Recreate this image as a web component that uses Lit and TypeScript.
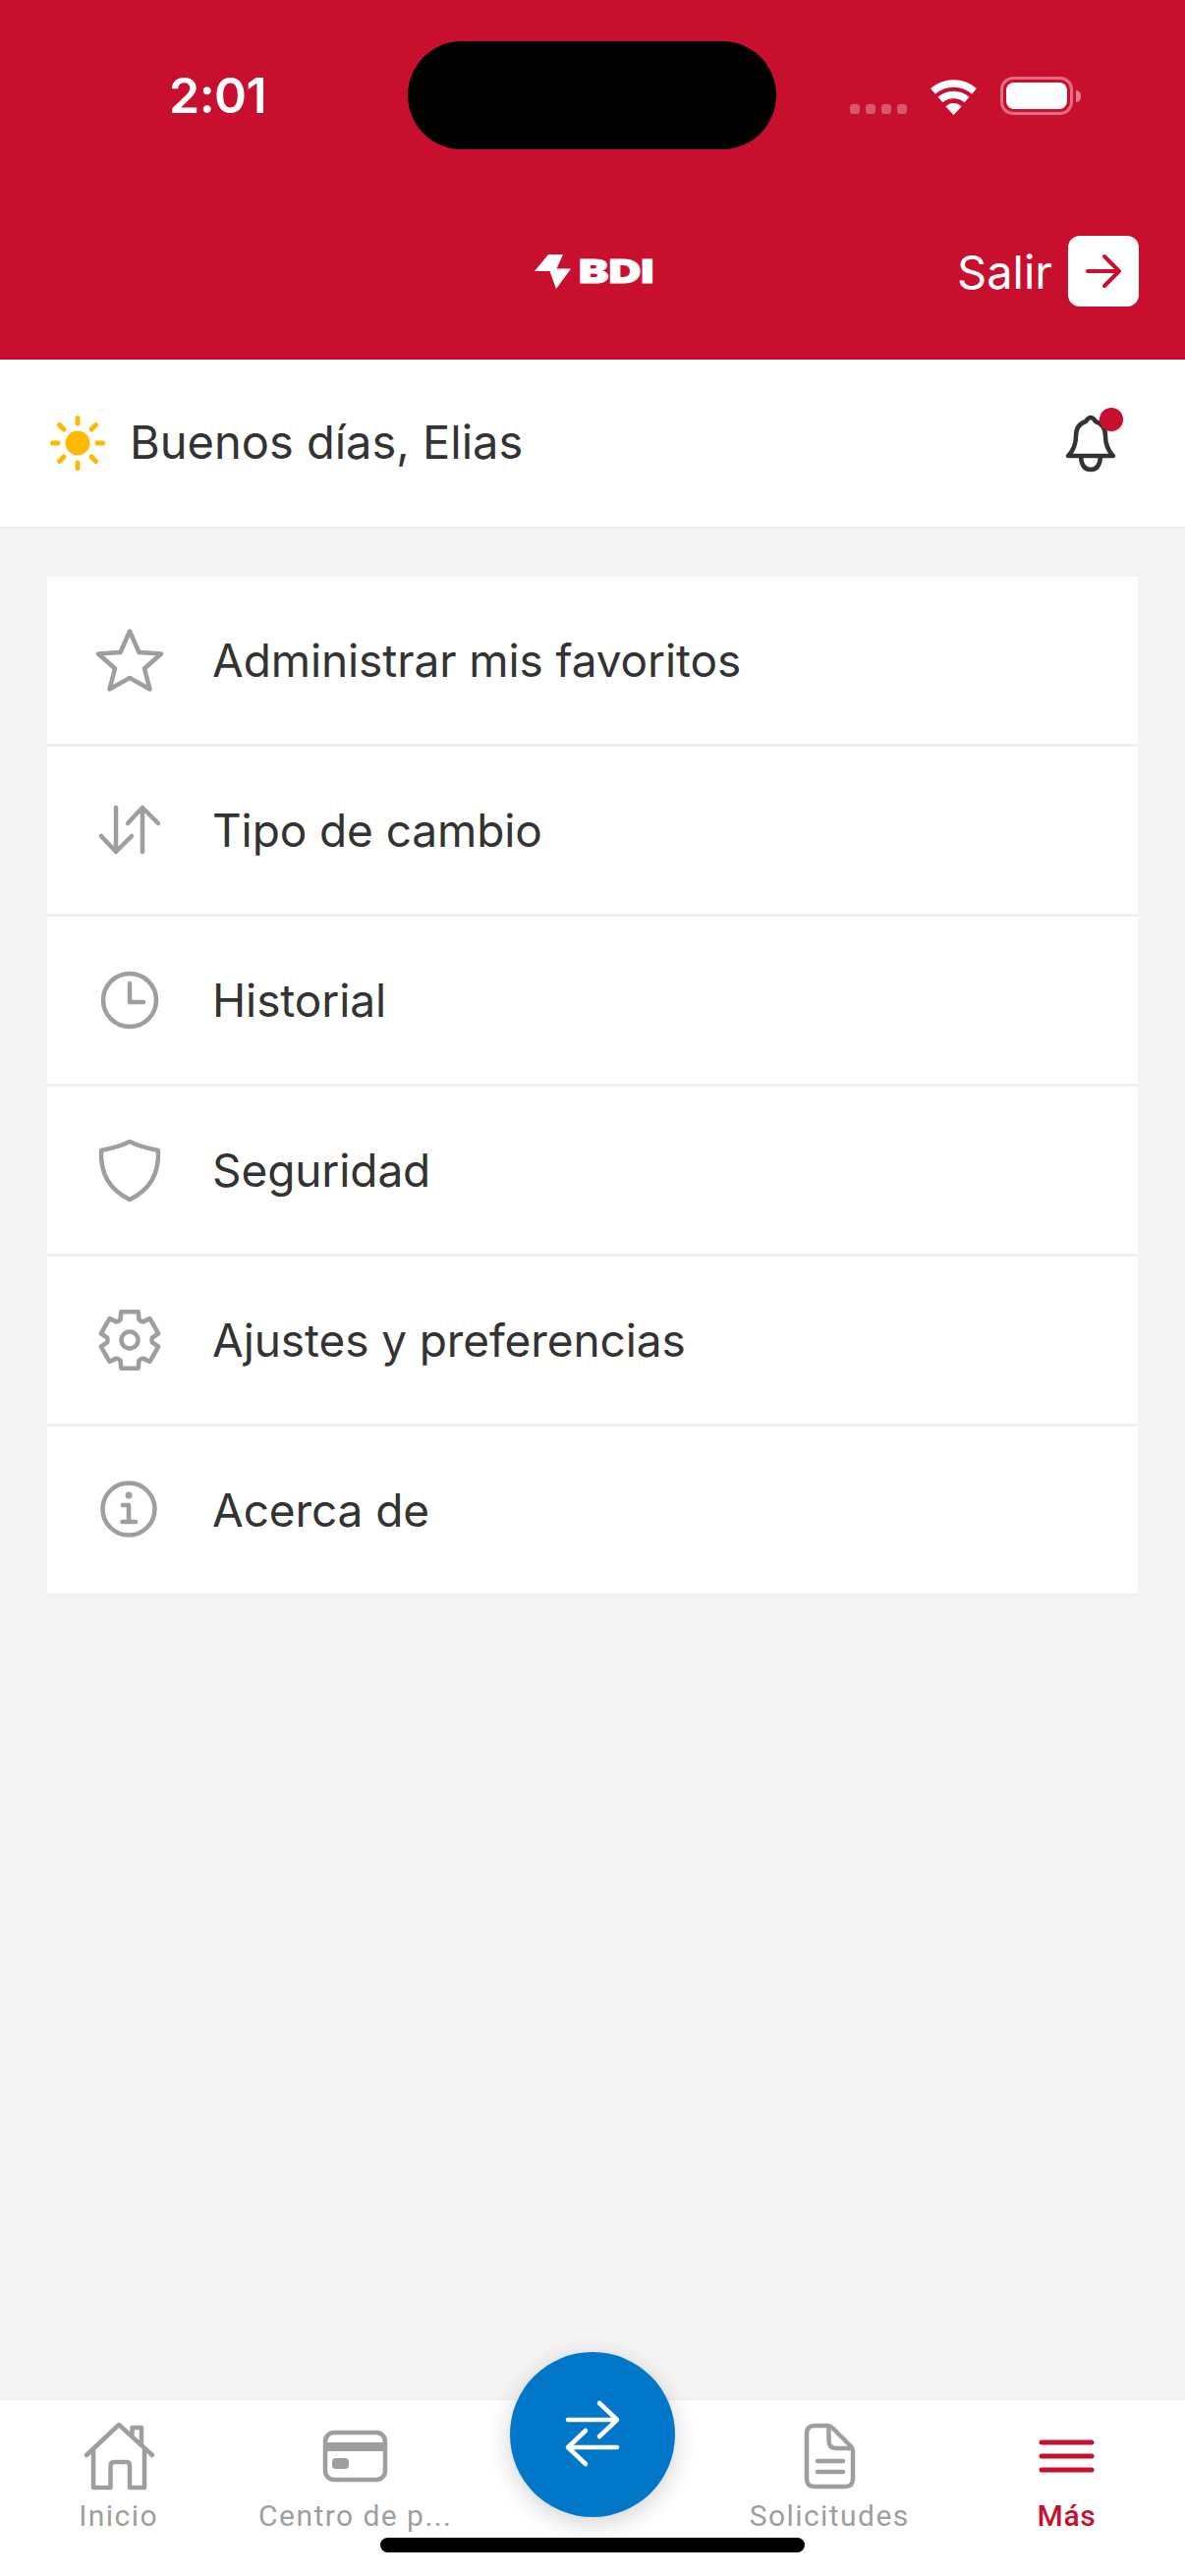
import { LitElement, html, css, svg } from "lit";
import { customElement } from "lit/decorators.js";

function gearPath(cx: number, cy: number): string {
  const pts: string[] = [];
  const Ro = 30, Ri = 23;
  for (let i = 0; i < 6; i++) {
    const a = (i * 60 - 90) * Math.PI / 180;
    const p = (r: number, d: number) => {
      const t = a + d * Math.PI / 180;
      return `${(cx + r * Math.cos(t)).toFixed(1)} ${(cy + r * Math.sin(t)).toFixed(1)}`;
    };
    pts.push(`${i === 0 ? "M" : "Q " + p(Ri - 1, -30) + " "}${p(Ri, -24)}`);
    pts.push(`L ${p(Ro, -17)} L ${p(Ro, 17)} L ${p(Ri, 24)}`);
  }
  const a0 = -120 * Math.PI / 180;
  const c = `${(cx + (Ri - 1) * Math.cos(a0)).toFixed(1)} ${(cy + (Ri - 1) * Math.sin(a0)).toFixed(1)}`;
  const s0 = `${(cx + Ri * Math.cos(-114 * Math.PI / 180)).toFixed(1)} ${(cy + Ri * Math.sin(-114 * Math.PI / 180)).toFixed(1)}`;
  return pts.join(" ") + ` Q ${c} ${s0} Z`;
}

const rows = [
  {
    label: "Administrar mis favoritos",
    box: "96 636 72 72",
    icon: svg`<path d="M132 642.500 L141.500 664 L164 665.500 L147 680.500 L152.500 701.500 L132 690 L111.500 701.500 L117 680.500 L100 665.500 L122.500 664 Z"/>`,
  },
  {
    label: "Tipo de cambio",
    box: "96 809 72 72",
    icon: svg`<path d="M118 822V867M103 851L118 867L134 851M145 822V867M130 838L145 822L161 838"/>`,
  },
  {
    label: "Historial",
    box: "96 982 72 72",
    icon: svg`<circle cx="132" cy="1018" r="27"/><path d="M132 1001V1020H146"/>`,
  },
  {
    label: "Seguridad",
    box: "96 1155 72 72",
    icon: svg`<path d="M132 1162 C122 1167 113 1169 103 1171 C102 1196 112 1211 132 1221 C152 1211 162 1196 161 1171 C151 1169 142 1167 132 1162 Z"/>`,
  },
  {
    label: "Ajustes y preferencias",
    box: "96 1328 72 72",
    icon: svg`<path d="${gearPath(132, 1364)}"/><circle cx="132" cy="1364" r="8.500"/>`,
  },
  {
    label: "Acerca de",
    box: "96 1501 72 72",
    icon: svg`<circle cx="131" cy="1536" r="26.500"/><path d="M125 1532H131V1549M124.500 1549H138"/><circle cx="131" cy="1522" r="3.500" fill="#9e9e9e" stroke="none"/>`,
  },
];

const tabs = [
  {
    label: "Inicio",
    box: "80 2464 80 72",
    icon: svg`<path d="M87 2499 L120 2468 L154 2499 M94 2492 V2532 H111.500 V2510 Q111.500 2506 115 2506 H128 Q131 2506 131 2510 V2532 H146 V2492 M133.500 2478 V2471 H143 V2489"/>`,
  },
  {
    label: "Centro de p...",
    box: "322 2464 80 72",
    icon: svg`<rect x="331" y="2476" width="61" height="48" rx="9"/><rect x="331" y="2486" width="61" height="9" fill="#9e9e9e" stroke="none"/><rect x="338" y="2502" width="17" height="11" rx="4" fill="#9e9e9e" stroke="none"/>`,
  },
  null,
  {
    label: "Solicitudes",
    box: "804 2464 80 72",
    icon: svg`<path d="M829 2469 H842 Q845 2469 847 2471 L866 2490 Q868 2492 868 2495 V2523 Q868 2531 860 2531 H829 Q821 2531 821 2523 V2477 Q821 2469 829 2469 Z M843.500 2470 V2484 Q843.500 2492 851 2492 H867 M832 2505 H858 M832 2516 H858"/>`,
  },
  {
    label: "Más",
    box: "1045 2464 80 72",
    active: true,
    icon: svg`<path d="M1060 2486 H1111 M1060 2500 H1111 M1060 2514 H1111"/>`,
  },
];

@customElement("app-root")
export class AppRoot extends LitElement {
  static styles = css`
    :host { display: block; }
    * { box-sizing: border-box; }
    .page {
      position: relative;
      width: 1206px;
      height: 2622px;
      display: flex;
      flex-direction: column;
      background: #f4f4f4;
      font-family: Inter, "Liberation Sans", sans-serif;
      color: #333;
      overflow: hidden;
    }
    .header { background: #c8102e; color: #fff; height: 366px; flex: none; }
    .status {
      height: 240px;
      padding: 78px 106px 0 172px;
      display: flex;
      justify-content: space-between;
      align-items: flex-start;
    }
    .time { font-size: 50px; font-weight: 600; line-height: 39px; letter-spacing: -0.5px; }
    .sys { display: flex; align-items: flex-end; height: 39px; }
    .dots { display: flex; gap: 6px; margin-right: 23px; margin-bottom: 1px; }
    .dots i { width: 10px; height: 10px; border-radius: 3px; background: rgba(255,255,255,.3); display: block; }
    .wifi { width: 52px; height: 38px; display: block; margin-right: 21px; margin-left: -1px; }
    .batt {
      width: 74px; height: 39px; border: 3px solid rgba(255,255,255,.4);
      border-radius: 13px; padding: 3px; position: relative;
    }
    .batt b { display: block; height: 100%; background: #fff; border-radius: 8px; }
    .nub {
      width: 5px; height: 12px; margin: 0 0 13px 3px;
      background: rgba(255,255,255,.45); border-radius: 0 6px 6px 0;
    }
    .nav {
      height: 72px;
      padding: 0 47px;
      display: grid;
      grid-template-columns: 1fr auto 1fr;
      align-items: center;
    }
    .logo {
      grid-column: 2;
      display: flex;
      align-items: center;
      width: 120px;
      margin-left: 1px;
      gap: 8px;
    }
    .logo svg { width: 37px; height: 35px; display: block; flex: none; }
    .bdi {
      font-family: Inter, sans-serif;
      font-weight: 900;
      font-size: 33px;
      line-height: 24px;
      letter-spacing: 0;
      transform: scaleX(1.38);
      transform-origin: left center;
      -webkit-text-stroke: 1px #fff;
    }
    .exit {
      grid-column: 3;
      justify-self: end;
      display: flex;
      align-items: center;
      gap: 16px;
      font-size: 47px;
      line-height: 72px;
    }
    .exit span { position: relative; top: 1px; }
    .exitbtn {
      width: 72px; height: 72px; border-radius: 12px; background: #fff;
      display: flex; align-items: center; justify-content: center;
    }
    .exitbtn svg { width: 40px; height: 40px; display: block; }
    .greet {
      height: 173px;
      flex: none;
      background: #fff;
      border-bottom: 3px solid #eeeeee;
      padding: 0 62px 0 51px;
      display: flex;
      align-items: center;
    }
    .sun { width: 56px; height: 56px; display: block; flex: none; margin-right: 25px; }
    .greet .txt { flex: 1; font-size: 47px; line-height: 60px; position: relative; top: -1px; }
    .bell { position: relative; width: 66px; height: 66px; flex: none; }
    .bell svg { width: 66px; height: 66px; display: block; }
    .bell i {
      position: absolute; right: 1px; top: -3px; width: 24px; height: 24px;
      border-radius: 50%; background: #c8102e;
    }
    .main { flex: 1; padding: 48px 48px 0; }
    .list { display: flex; flex-direction: column; }
    .row {
      height: 173px;
      background: #fff;
      border-bottom: 3px solid #f0f0f0;
      display: flex;
      align-items: center;
      padding-left: 48px;
      gap: 48px;
      font-size: 46px;
      letter-spacing: -0.1px;
    }
    .row svg {
      width: 72px; height: 72px; display: block; flex: none;
      fill: none; stroke: #9e9e9e; stroke-width: 4.500; stroke-linecap: round; stroke-linejoin: round;
    }
    .tabbar {
      height: 180px;
      flex: none;
      background: #fff;
      border-top: 1px solid #ececec;
      display: grid;
      grid-template-columns: repeat(5, 1fr);
      padding-top: 21px;
    }
    .tab {
      display: flex;
      flex-direction: column;
      align-items: center;
      color: #9e9e9e;
      font-family: Roboto, sans-serif;
      font-size: 30px;
      line-height: 34px;
      letter-spacing: 1.45px;
      gap: 8px;
      white-space: nowrap;
    }
    .tab svg {
      width: 80px; height: 72px; display: block;
      fill: none; stroke: #9e9e9e; stroke-width: 4.500; stroke-linecap: round; stroke-linejoin: round;
    }
    .tab.on { color: #c8102e; font-weight: 500; letter-spacing: .6px; }
    .tab.on svg { stroke: #c8102e; stroke-width: 5; }
    .fab {
      position: absolute; left: 519px; top: 2394px; width: 168px; height: 168px;
      border-radius: 50%; background: #0277c9;
      box-shadow: 0 6px 24px rgba(0,0,0,.18);
      display: flex; align-items: center; justify-content: center;
    }
    .fab svg {
      width: 72px; height: 72px; display: block;
      fill: none; stroke: #fff; stroke-width: 4.500; stroke-linecap: round; stroke-linejoin: round;
    }
    .island {
      position: absolute; left: 415px; top: 42px; width: 375px; height: 110px;
      border-radius: 55px; background: #000;
    }
    .home {
      position: absolute; left: 387px; top: 2583px; width: 432px; height: 15px;
      border-radius: 8px; background: #000;
    }
  `;

  render() {
    return html`
      <div class="page">
        <div class="header">
          <div class="status">
            <div class="time">2:01</div>
            <div class="sys">
              <div class="dots"><i></i><i></i><i></i><i></i></div>
              <svg class="wifi" viewBox="0 0 52 38">
                <path d="M4.500 13.800 A32 32 0 0 1 46.500 13.800 M12 22.500 A20.500 20.500 0 0 1 39 22.500" fill="none" stroke="#fff" stroke-width="7.500"/>
                <path d="M25.500 38 L17.500 29.500 A11 11 0 0 1 33.500 29.500 Z" fill="#fff"/>
              </svg>
              <div class="batt"><b></b></div>
              <div class="nub"></div>
            </div>
          </div>
          <div class="nav">
            <div class="logo">
              <svg viewBox="0 0 37 35"><path d="M14 0 H29 L22.500 14.500 H37 L22 35 L15.500 17 H0 Z" fill="#fff"/></svg>
              <span class="bdi">BDI</span>
            </div>
            <div class="exit">
              <span>Salir</span>
              <div class="exitbtn">
                <svg viewBox="0 0 40 40"><path d="M4 20 H36 M21 5 L36 20 L21 35" fill="none" stroke="#c8102e" stroke-width="4" stroke-linecap="round" stroke-linejoin="round"/></svg>
              </div>
            </div>
          </div>
        </div>
        <div class="greet">
          <svg class="sun" viewBox="0 0 56 56">
            <circle cx="28" cy="28" r="12.500" fill="#ffb900"/>
            <path d="M28 2.500V8M28 48V53.500M2.500 28H8M48 28H53.500M9.500 9.500L14 14M42 42L46.500 46.500M9.500 46.500L14 42M42 14L46.500 9.500" stroke="#ffb900" stroke-width="5" stroke-linecap="round"/>
          </svg>
          <div class="txt">Buenos días, Elias</div>
          <div class="bell">
            <svg viewBox="1078 418 66 66">
              <path d="M1087 464 Q1095 456 1095 444 Q1095 432 1105 429 Q1110 421 1115 429 Q1125 432 1125 444 Q1125 456 1133 464 Z M1100 465 Q1101 478 1110 478 Q1119 478 1120 465" fill="none" stroke="#333" stroke-width="4.500" stroke-linejoin="round" stroke-linecap="round"/>
            </svg>
            <i></i>
          </div>
        </div>
        <div class="main">
          <div class="list">
            ${rows.map(
              (r) => html`<div class="row">
                <svg viewBox="${r.box}">${r.icon}</svg>
                <span>${r.label}</span>
              </div>`
            )}
          </div>
        </div>
        <div class="tabbar">
          ${tabs.map((t) =>
            t
              ? html`<div class="tab ${t.active ? "on" : ""}">
                  <svg viewBox="${t.box}">${t.icon}</svg>
                  <span>${t.label}</span>
                </div>`
              : html`<div></div>`
          )}
        </div>
        <div class="island"></div>
        <div class="fab">
          <svg viewBox="567 2442 72 72">
            <path d="M578 2463 H628 M610 2446 L628 2463 L610 2480 M628 2491 H578 M596 2474 L578 2491 L596 2508"/>
          </svg>
        </div>
        <div class="home"></div>
      </div>
    `;
  }
}
